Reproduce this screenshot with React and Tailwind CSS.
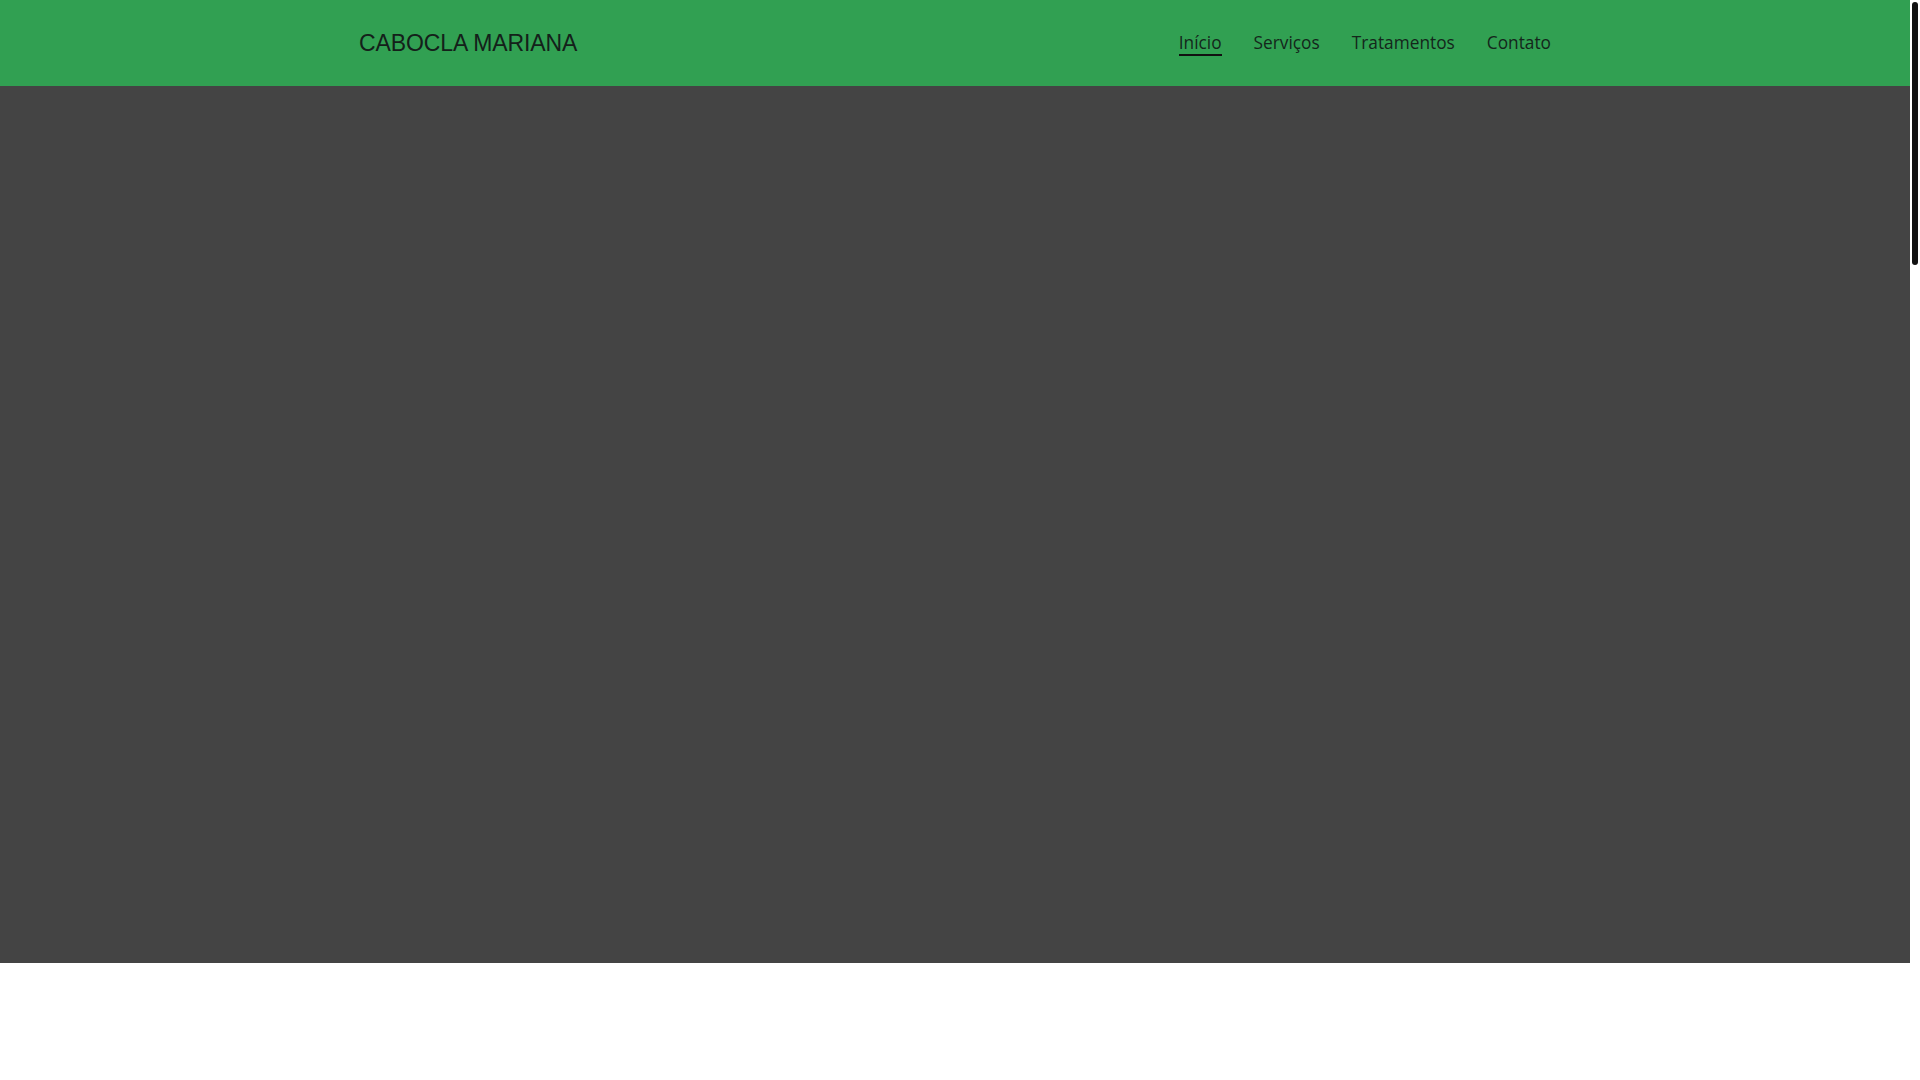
const navItems = ['Início', 'Serviços', 'Tratamentos', 'Contato'];

export default function App() {
  return (
    <div className="flex h-screen overflow-hidden bg-white">
      <main className="flex-1 overflow-hidden">
        <header className="h-[86px] bg-[#31a052]">
          <div className="mx-auto flex h-full max-w-[1192px] items-center justify-between">
            <a
              href="#"
              className="text-[23px] tracking-[-0.1px] text-[#14201a]"
              style={{ fontFamily: '"Liberation Sans", Arial, sans-serif' }}
            >
              CABOCLA MARIANA
            </a>
            <nav
              className="flex items-center gap-8 text-[17.3px] leading-[20px] text-[#14261b]"
              style={{ fontFamily: '"Open Sans", "Noto Sans", sans-serif' }}
            >
              {navItems.map((item, i) => (
                <a
                  key={item}
                  href="#"
                  className={
                    i === 0
                      ? 'border-b-2 border-[#111] pt-[2px] pb-[1px]'
                      : 'border-b-2 border-transparent pt-[2px] pb-[1px]'
                  }
                >
                  {item}
                </a>
              ))}
            </nav>
          </div>
        </header>
        <section className="h-[877px] bg-[#444444]" />
        <div className="h-[400px] bg-white" />
      </main>
      <aside className="w-[10px] shrink-0 bg-white px-[2px] pt-[2px]">
        <div className="h-[263px] rounded-full bg-[#111111]" />
      </aside>
    </div>
  );
}
